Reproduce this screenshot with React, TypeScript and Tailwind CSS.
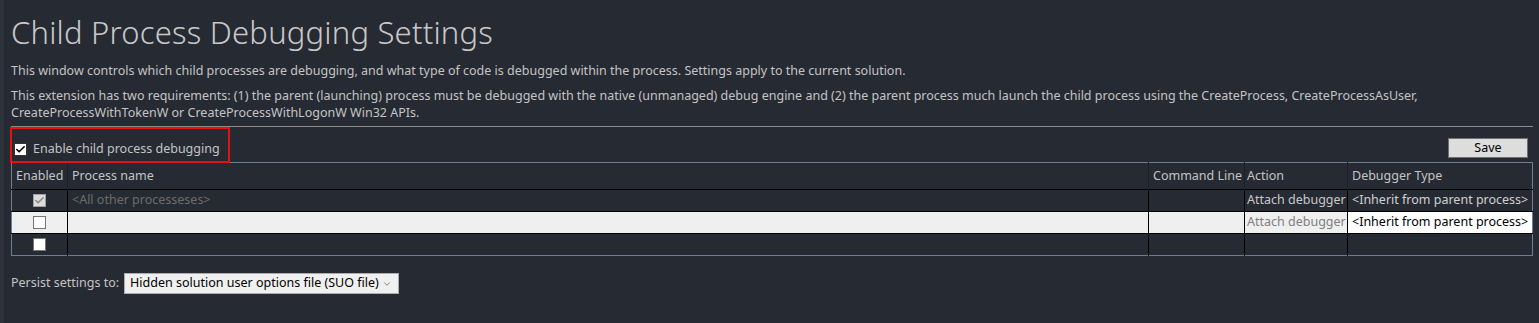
import { Check, ChevronDown } from 'lucide-react';

const font = "font-['Noto_Sans','Liberation_Sans',sans-serif]";

function Box({ checked, dim, light }: { checked?: boolean; dim?: boolean; light?: boolean }) {
  return (
    <span
      className={
        'inline-flex w-[13px] h-[13px] items-center justify-center border ' +
        (dim ? 'border-[#a0a0a0] bg-[#dcdcdc]' : light ? 'border-[#333] bg-white' : 'border-[#777] bg-white')
      }
    >
      {checked && <Check size={11} strokeWidth={3.5} className={dim ? 'text-[#8a8a8a]' : 'text-black'} />}
    </span>
  );
}

export default function App() {
  return (
    <div className={`${font} w-[1539px] h-[323px] bg-[#262a33] flex text-[#c4c4c4]`}>
      <div className="w-[4px] bg-[#2e323b]" />
      <div className="flex-1 pl-[7px] pr-[6px]">
        <h1 className="text-[31px] font-light leading-none pt-[17px] h-[55px] text-[#c8c8c8] tracking-[0.2px]">
          Child Process Debugging Settings
        </h1>
        <p className="text-[12.5px] leading-[17px] mt-[7px]">
          This window controls which child processes are debugging, and what type of code is debugged within the process. Settings apply to the current solution.
        </p>
        <p className="text-[12.5px] leading-[17px] mt-[8px]">
          This extension has two requirements: (1) the parent (launching) process must be debugged with the native (unmanaged) debug engine and (2) the parent process much launch the child process using the CreateProcess, CreateProcessAsUser,
          <br />
          CreateProcessWithTokenW or CreateProcessWithLogonW Win32 APIs.
        </p>
        <div className="h-px bg-[#8c8c8c] mt-[5px]" />
        <div className="flex items-end justify-between h-[36px]">
          <label className="flex items-center gap-[6px] border-2 border-[#e81010] h-[36px] w-[220px] -ml-[1px] mt-[1px] pl-[2px] text-[12.5px] pt-[8px]">
            <Box checked light />
            <span>Enable child process debugging</span>
          </label>
          <button className="w-[80px] h-[20px] mb-[5px] mr-[5px] bg-[#dddddd] border border-[#707070] text-black text-[12.5px] leading-none">
            Save
          </button>
        </div>
        <table className="w-full table-fixed border-collapse border border-[#6f7e93] text-[12.5px] -mt-[1px] whitespace-nowrap">
          <thead>
            <tr className="h-[27px] text-left">
              <th className="w-[56px] font-normal px-[4px] border-r border-[#1c1f26]">Enabled</th>
              <th className="font-normal px-[4px] border-r border-[#1c1f26]">Process name</th>
              <th className="w-[96px] font-normal px-[4px] border-r border-[#1c1f26]">Command Line</th>
              <th className="w-[103px] font-normal px-[2px] border-r border-[#1c1f26]">Action</th>
              <th className="w-[185px] font-normal px-[4px]">Debugger Type</th>
            </tr>
          </thead>
          <tbody>
            <tr className="h-[22px] border-t border-black">
              <td className="text-center border-r border-black align-middle"><span className="inline-flex align-middle"><Box checked dim /></span></td>
              <td className="px-[4px] border-r border-black text-[#6c6c6c]">&lt;All other processeses&gt;</td>
              <td className="border-r border-black" />
              <td className="px-[2px] border-r border-black text-[#c8c8c8]">Attach debugger</td>
              <td className="px-[4px] text-[#d0d0d0]">&lt;Inherit from parent process&gt;</td>
            </tr>
            <tr className="h-[22px] border-t border-black bg-[#efefef]">
              <td className="text-center border-r border-black"><span className="inline-flex align-middle"><Box /></span></td>
              <td className="border-r border-black" />
              <td className="border-r border-black" />
              <td className="px-[2px] border-r border-black text-[#7f7f7f]">Attach debugger</td>
              <td className="px-[4px] bg-white text-black">&lt;Inherit from parent process&gt;</td>
            </tr>
            <tr className="h-[22px] border-t border-black">
              <td className="text-center border-r border-black"><span className="inline-flex align-middle"><Box /></span></td>
              <td className="border-r border-black" />
              <td className="border-r border-black" />
              <td className="border-r border-black" />
              <td />
            </tr>
          </tbody>
        </table>
        <div className="flex items-center gap-[5px] mt-[17px] text-[12.5px]">
          <span>Persist settings to:</span>
          <div className="flex items-center justify-between w-[275px] h-[21px] bg-[#f0f0f0] border border-[#acacac] text-black pl-[5px] pr-[6px] text-[12.5px] whitespace-nowrap">
            <span>Hidden solution user options file (SUO file)</span>
            <ChevronDown size={10} className="text-[#707070]" />
          </div>
        </div>
      </div>
    </div>
  );
}
